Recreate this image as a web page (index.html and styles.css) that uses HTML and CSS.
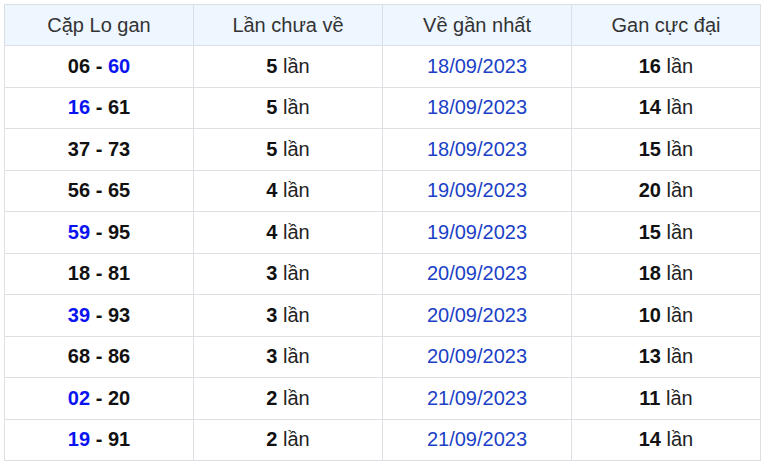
FILE: index.html
```html
<!DOCTYPE html>
<html lang="vi">
<head>
<meta charset="utf-8">
<link rel="stylesheet" href="styles.css">
</head>
<body>
<table class="gan">
<thead>
<tr><th>Cặp Lo gan</th><th>Lần chưa về</th><th>Về gần nhất</th><th>Gan cực đại</th></tr>
</thead>
<tbody>
<tr><td><b>06</b> <b>-</b> <b class="hl">60</b></td><td><b>5</b> lần</td><td class="date">18/09/2023</td><td><b>16</b> lần</td></tr>
<tr><td><b class="hl">16</b> <b>-</b> <b>61</b></td><td><b>5</b> lần</td><td class="date">18/09/2023</td><td><b>14</b> lần</td></tr>
<tr><td><b>37</b> <b>-</b> <b>73</b></td><td><b>5</b> lần</td><td class="date">18/09/2023</td><td><b>15</b> lần</td></tr>
<tr><td><b>56</b> <b>-</b> <b>65</b></td><td><b>4</b> lần</td><td class="date">19/09/2023</td><td><b>20</b> lần</td></tr>
<tr><td><b class="hl">59</b> <b>-</b> <b>95</b></td><td><b>4</b> lần</td><td class="date">19/09/2023</td><td><b>15</b> lần</td></tr>
<tr><td><b>18</b> <b>-</b> <b>81</b></td><td><b>3</b> lần</td><td class="date">20/09/2023</td><td><b>18</b> lần</td></tr>
<tr><td><b class="hl">39</b> <b>-</b> <b>93</b></td><td><b>3</b> lần</td><td class="date">20/09/2023</td><td><b>10</b> lần</td></tr>
<tr><td><b>68</b> <b>-</b> <b>86</b></td><td><b>3</b> lần</td><td class="date">20/09/2023</td><td><b>13</b> lần</td></tr>
<tr><td><b class="hl">02</b> <b>-</b> <b>20</b></td><td><b>2</b> lần</td><td class="date">21/09/2023</td><td><b>11</b> lần</td></tr>
<tr><td><b class="hl">19</b> <b>-</b> <b>91</b></td><td><b>2</b> lần</td><td class="date">21/09/2023</td><td><b>14</b> lần</td></tr>
</tbody>
</table>
</body>
</html>
```
FILE: styles.css
```css
html, body {
  margin: 0;
  background: #fff;
}
body {
  padding: 4px;
  font-family: "Liberation Sans", Arial, sans-serif;
  font-size: 20px;
  color: #222;
}
.gan {
  width: 757px;
  border-collapse: collapse;
  table-layout: fixed;
}
.gan th, .gan td {
  border: 1px solid #dcdfe3;
  text-align: center;
  vertical-align: middle;
  padding: 0;
  height: 41.5px;
  box-sizing: border-box;
}
.gan th {
  background: #eef6ff;
  font-weight: normal;
  color: #333;
  height: 41px;
}
.gan td b {
  color: #111;
  font-weight: bold;
}
.gan td b.hl {
  color: #0a14f0;
}
.gan td.date {
  color: #1b3fc6;
}
```
